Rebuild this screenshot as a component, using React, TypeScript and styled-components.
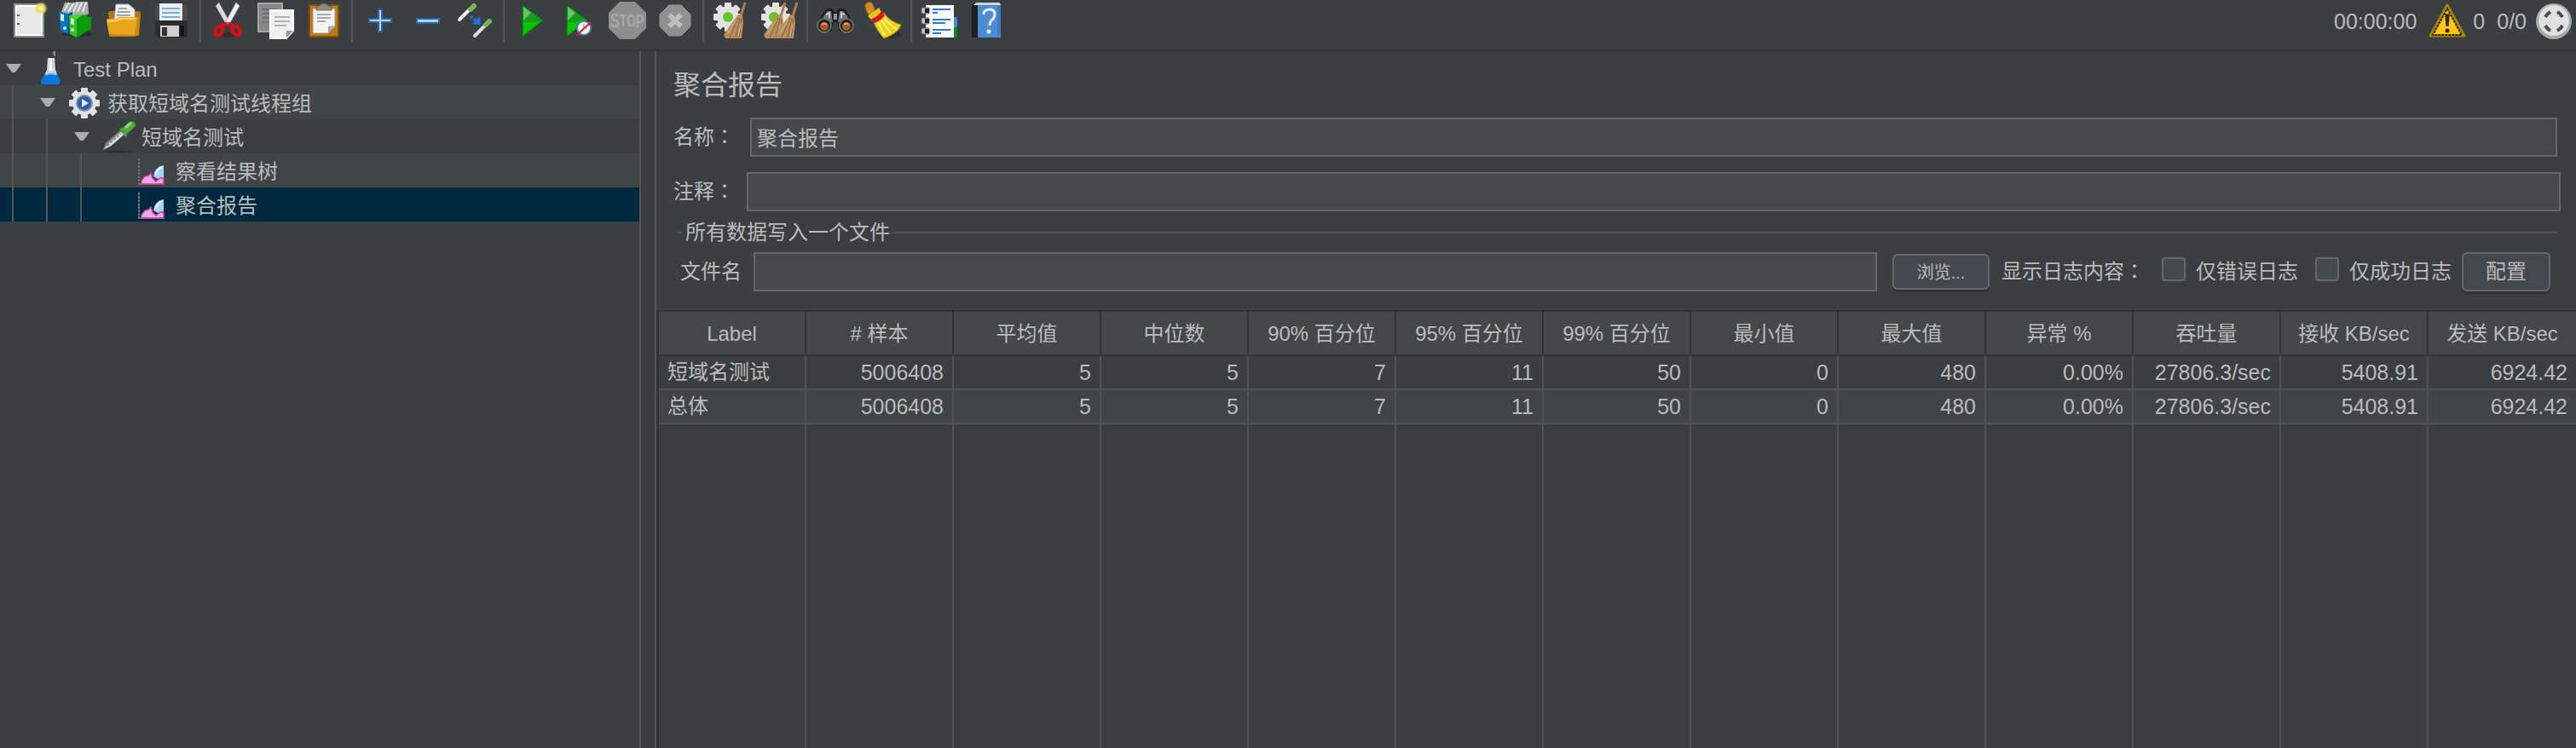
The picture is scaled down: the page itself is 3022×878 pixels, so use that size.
import React from "react";
import styled, { createGlobalStyle } from "styled-components";

const c = {
  bg: "#3b3f41",
  stripe: "#404547",
  field: "#454949",
  head: "#44484a",
  line: "#555555",
  grid: "#4f5354",
  border: "#666969",
  dark: "#303436",
  text: "#bbbbbb",
  select: "#00293f",
};

const GlobalStyle = createGlobalStyle`
  *, *::before, *::after { box-sizing: border-box; }
  body {
    margin: 0;
    background: ${c.bg};
    color: ${c.text};
    font: 24px/40px "Liberation Sans", "Noto Sans CJK SC", sans-serif;
  }
`;

const Window = styled.div`
  display: flex;
  flex-direction: column;
  min-height: 100vh;
`;

const Toolbar = styled.header`
  display: flex;
  justify-content: space-between;
  height: 60px;
  padding: 0 4px 0 6px;
  border-bottom: 2px solid ${c.dark};
`;

const Tools = styled.div`
  display: flex;
  height: 50px;
`;

const Group = styled.div`
  display: flex;
  & + & {
    margin-left: 4px;
    padding-left: 4px;
    border-left: 2px solid ${c.line};
  }
`;

const ToolButton = styled.button`
  width: 56px;
  height: 48px;
  padding: 2px 6px;
  border: 0;
  background: none;
  svg { display: block; }
`;

const Status = styled.div`
  display: flex;
  align-items: center;
  height: 50px;
  gap: 14px;
  font-size: 25px;
  svg { display: block; }
`;

const Errors = styled.div`
  display: flex;
  align-items: center;
  gap: 8px;
`;

const Counters = styled.div`
  display: flex;
  align-items: center;
  gap: 10px;
`;

const Body = styled.div`
  display: flex;
  flex: 1;
`;

const Sidebar = styled.nav`
  flex: 0 0 752px;
  border-right: 2px solid ${c.line};
`;

const Tree = styled.ul`
  margin: 0;
  padding: 0;
  list-style: none;
`;

const TreeRow = styled.li<{ $selected?: boolean }>`
  display: flex;
  height: 40px;
  background: ${c.bg};
  &:nth-child(even) { background: ${c.stripe}; }
  &&:nth-child(n) { ${(p) => (p.$selected ? `background: ${c.select};` : "")} }
`;

const Guide = styled.span`
  width: 40px;
  padding-left: 14px;
  &::before {
    content: "";
    display: block;
    width: 2px;
    height: 100%;
    background: ${c.line};
  }
`;

const Toggle = styled.span`
  display: flex;
  align-items: center;
  width: 40px;
  padding-left: 7px;
`;

const TreeIcon = styled.span`
  display: flex;
  align-items: center;
  width: 46px;
`;

const TreeLabel = styled.span`
  line-height: 44px;
`;

const Splitter = styled.div`
  width: 18px;
  border-right: 2px solid ${c.line};
`;

const Main = styled.main`
  display: flex;
  flex: 1;
  flex-direction: column;
  min-width: 0;
`;

const Form = styled.form`
  display: flex;
  flex-direction: column;
  height: 304px;
  padding: 16px 18px 0 20px;
`;

const Title = styled.h1`
  margin: 0 0 14px;
  font-size: 32px;
  font-weight: 400;
  line-height: 48px;
`;

const Field = styled.div<{ $inset?: boolean }>`
  display: flex;
  align-items: center;
  gap: ${(p) => (p.$inset ? 18 : 14)}px;
  margin: 0 ${(p) => (p.$inset ? 4 : 0)}px 18px 0;
`;

const Colon = styled.span`
  font-family: "Noto Sans CJK TC", sans-serif;
  line-height: 1;
`;

const TextInput = styled.input`
  flex: 1;
  min-width: 0;
  height: 46px;
  padding: 0 6px 2px;
  border: 2px solid ${c.border};
  background: ${c.field};
  color: inherit;
  font: inherit;
`;

const FileGroup = styled.fieldset`
  min-width: 0;
  margin: -13px 4px 0 4px;
  padding: 0 8px 0 4px;
  border: 0 solid ${c.line};
  border-top-width: 2px;
`;

const Legend = styled.legend`
  margin-left: 2px;
  padding: 0 4px;
  line-height: 40px;
`;

const FileRow = styled.div`
  display: flex;
  align-items: center;
  margin-top: 3px;
  height: 46px;
`;

const FileLabel = styled.label`
  margin-right: 14px;
`;

const Button = styled.button<{ $small?: boolean }>`
  flex: none;
  width: ${(p) => (p.$small ? 114 : 104)}px;
  height: ${(p) => (p.$small ? 42 : 46)}px;
  margin: ${(p) => (p.$small ? "0 14px 0 18px" : "0 0 0 12px")};
  padding: 0;
  border: 2px solid ${c.border};
  border-radius: 6px;
  background: #434a4d;
  box-shadow: 0 3px 1px ${c.dark};
  color: inherit;
  font: inherit;
  font-size: ${(p) => (p.$small ? 20 : 24)}px;
`;

const LogLabel = styled.span`
  width: 188px;
`;

const Check = styled.label`
  display: flex;
  align-items: center;
  gap: 12px;
  & + & { margin-left: 20px; }
`;

const Box = styled.input`
  appearance: none;
  width: 28px;
  height: 28px;
  margin: 0 0 6px;
  border: 2px solid ${c.border};
  border-radius: 4px;
  background: #434a4d;
`;

const Results = styled.table`
  flex: 1;
  width: 100%;
  table-layout: fixed;
  border-spacing: 0;
  border-left: 3px solid ${c.dark};
  border-top: 2px solid ${c.dark};
`;

const HeadCell = styled.th`
  height: 52px;
  padding: 2px 0 0;
  border: solid ${c.dark};
  border-width: 0 2px 2px 0;
  background: ${c.head};
  font-weight: 400;
  white-space: nowrap;
  &:last-child { border-right: 0; }
`;

const Row = styled.tr`
  height: 40px;
  &:nth-child(even) { background: ${c.stripe}; }
`;

const Cell = styled.td`
  padding: 0 10px;
  border: solid ${c.grid};
  border-width: 0 2px 2px 0;
  font-size: 25px;
  line-height: 38px;
  text-align: right;
  white-space: nowrap;
  &:first-child {
    font-size: 24px;
    text-align: left;
  }
  &:last-child { border-right: 0; }
`;

const Filler = styled.td`
  border-right: 2px solid ${c.grid};
  &:last-child { border-right: 0; }
`;

const Art = ({ children, w = 44, h = 44 }: { children: React.ReactNode; w?: number; h?: number }) => (
  <svg width={w} height={h} viewBox={`0 0 ${w} ${h}`} aria-hidden="true">
    {children}
  </svg>
);

const NewIcon = () => (
  <Art>
    <defs>
      <radialGradient id="glow"><stop offset="0" stopColor="#fffbe0" /><stop offset=".5" stopColor="#f2df55" /><stop offset="1" stopColor="#f2df55" stopOpacity="0" /></radialGradient>
    </defs>
    <rect x="5" y="3" width="34" height="38" fill="#e8e8e8" stroke="#8d8d89" strokeWidth="2" />
    <rect x="7" y="5" width="30" height="34" fill="none" stroke="#fff" strokeWidth="2" />
    <path d="M8 16h3M8 26h3" stroke="#666" strokeWidth="2" />
    <circle cx="36" cy="8" r="8" fill="url(#glow)" />
  </Art>
);

const TemplatesIcon = () => (
  <Art>
    <ellipse cx="23" cy="38" rx="18" ry="3" fill="#2c2f31" />
    <path d="M4 12l4-11h8l2 3 3-4h14l1 14-16 8z" fill="#a9adae" />
    <path d="M7 11l6-10M12 12l7-11M23 12l5-11M29 12l4-11M18 12l5-11" stroke="#e6e9ea" strokeWidth="2" />
    <path d="M1 11l11 3v24L3 34z" fill="#0a74c4" />
    <path d="M12 14l5-2v26l-5 0z" fill="#0a4f91" />
    <path d="M3 14l4 1v8l-4-1z" fill="#d8efff" />
    <circle cx="8" cy="31" r="2" fill="#d8efff" />
    <path d="M13 16l9 4v22l-8-4z" fill="#33c51c" />
    <path d="M22 20l7-5 10 3v14l-17 10z" fill="#0b9a0b" />
    <path d="M13 16l9-1 7 0-7 5z" fill="#4bd536" />
    <path d="M15 19l4 1v7l-4-1z" fill="#d8ffcf" />
    <circle cx="17" cy="33" r="2" fill="#d8ffcf" />
  </Art>
);

const OpenIcon = () => (
  <Art>
    <path d="M3 14q0-3 3-3h32q3 0 3 3l-3 26H8z" fill="#b8770c" />
    <path d="M12 3h15l7 6v20H9z" fill="#f1f1f1" stroke="#aaa" />
    <path d="M15 8h10M14 12h15M13 16h16" stroke="#a5a5a5" strokeWidth="2" />
    <path d="M1 22q0-2 2-2h10l3-2h19q3 0 3 3l-3 18q0 2-3 2H7q-3 0-3-2z" fill="#e9a51d" />
    <path d="M2 23l12-1 3-2h18" stroke="#ffd268" strokeWidth="2" fill="none" />
    <path d="M4 38q0 3 3 3h27l5-2 2-25-4 6-3 19z" fill="#c9850f" />
  </Art>
);

const SaveIcon = () => (
  <Art>
    <path d="M2 3h38v36q0 3-3 3H6l-4-4z" fill="#4a4a4c" />
    <path d="M2 22h38v17q0 3-3 3H6l-4-4z" fill="#2c2c2e" />
    <rect x="7" y="2" width="27" height="20" fill="#e6f1fb" />
    <path d="M10 8h21M10 13h21M10 18h21" stroke="#82acd0" strokeWidth="2" />
    <rect x="8" y="28" width="22" height="13" fill="#cfcfcf" />
    <rect x="10" y="30" width="6" height="10" fill="#333" />
    <rect x="31" y="28" width="5" height="12" fill="#111" />
  </Art>
);

const CutIcon = () => (
  <Art>
    <ellipse cx="22" cy="39" rx="13" ry="3" fill="#2d3032" />
    <path d="M7 5l4-4 13 24-4 3z" fill="#d8d8d6" />
    <path d="M35 5l-4-4-13 24 4 3z" fill="#f0f0ee" stroke="#aaa" strokeWidth=".7" />
    <g fill="none" stroke="#df0d12" strokeWidth="4">
      <ellipse cx="11" cy="34" rx="4" ry="6" transform="rotate(35 11 34)" />
      <ellipse cx="31" cy="34" rx="4" ry="6" transform="rotate(-35 31 34)" />
      <path d="M14 28l5-2h4l5 2" />
    </g>
    <circle cx="21" cy="25" r="1.5" fill="#777" />
  </Art>
);

const CopyIcon = () => (
  <Art>
    <rect x="1" y="2" width="28" height="33" fill="#858788" stroke="#a4a6a6" strokeWidth="2" />
    <path d="M6 9h18M6 14h18M6 19h12M6 24h9" stroke="#6d6f70" strokeWidth="2" />
    <path d="M15 10h27v24l-8 9H15z" fill="#efefef" stroke="#fff" strokeWidth="2" />
    <path d="M20 18h18M20 23h18M20 28h14" stroke="#b1b1b1" strokeWidth="2" />
    <path d="M42 34h-8v9z" fill="#999" />
  </Art>
);

const PasteIcon = () => (
  <Art>
    <rect x="5" y="4" width="34" height="37" rx="1" fill="#bf7a14" stroke="#8a4d06" strokeWidth="2" />
    <path d="M9 8h26v21l-8 8H9z" fill="#f3f3f3" stroke="#999" />
    <path d="M14 15h16M14 19h16M14 23h10" stroke="#aaa" strokeWidth="2" />
    <path d="M35 28l-8 9v-8z" fill="#aaa" />
    <path d="M13 10V6l4-1q5-6 10 0l4 1v4z" fill="#8b8b7c" stroke="#6a6a5c" />
  </Art>
);

const PlusIcon = () => (
  <Art>
    <path d="M20 9h4v11h11v4H24v11h-4V24H9v-4h11z" fill="#b6d4f4" stroke="#2a66b0" strokeWidth="2" />
  </Art>
);

const MinusIcon = () => (
  <Art>
    <rect x="9" y="20" width="26" height="5" fill="#b6d4f4" stroke="#2a66b0" strokeWidth="2" />
  </Art>
);

const ToggleIcon = () => (
  <Art>
    <g strokeLinecap="round">
      <path d="M3 21L15 9" stroke="#f2f2ee" strokeWidth="4" />
      <path d="M16 9l4-4" stroke="#77b357" strokeWidth="6" />
      <path d="M21 40l12-12" stroke="#dcdcd8" strokeWidth="4" />
      <path d="M34 27l4-4" stroke="#77b357" strokeWidth="6" />
    </g>
    <path d="M16 17l6 5" stroke="#1973e0" strokeWidth="4" strokeDasharray="3 2" />
    <path d="M27 17l1 10-10-1z" fill="#1973e0" />
  </Art>
);

const Triangle = ({ x }: { x: number }) => (
  <>
    <path d={`M${x} 4l24 18-24 19z`} fill="#0fa50c" stroke="#077a06" />
    <path d={`M${x + 1} 6l21 16H${x + 1}z`} fill="#169a22" />
    <path d={`M${x + 1} 6l9 7-9 9z`} fill="#63c46c" />
    <path d={`M${x + 1} 24h19l-19 15z`} fill="#0ac407" />
  </>
);

const StartIcon = () => <Art><Triangle x={11} /></Art>;

const StartNoTimersIcon = () => (
  <Art>
    <Triangle x={7} />
    <circle cx="27" cy="31" r="8" fill="#f4f7fb" stroke="#5482b4" strokeWidth="2" />
    <path d="M27 26v5h4" stroke="#888" fill="none" />
    <path d="M18 40l17-16" stroke="#e02222" strokeWidth="2" />
  </Art>
);

const StopIcon = () => (
  <Art>
    <path d="M13 0h18l13 13v18L31 44H13L0 31V13z" fill="#8d8d8d" />
    <g fill="none" stroke="#a6a6a6" strokeWidth="2.5">
      <path d="M11 17q-1-2-4-2t-3 3 4 4 3 4-4 3-4-3M13 16h8M17 16v13" />
      <rect x="23" y="16" width="7" height="12" rx="3" />
      <path d="M34 30V16h3q3 0 3 4t-3 4h-3" />
    </g>
  </Art>
);

const ShutdownIcon = () => (
  <Art>
    <path d="M15 4h14l11 11v14L29 40H15L4 29V15z" fill="#909090" stroke="#999" />
    <path d="M15 15l14 14M29 15L15 29" stroke="#bdbdbd" strokeWidth="6" />
  </Art>
);

const cog = (cx: number, cy: number, r: number) => (
  <g fill="#e2e2e2">
    {[0, 45, 90, 135].map((a) => (
      <rect key={a} x={cx - 4} y={cy - r} width="8" height={r * 2} rx="1" transform={`rotate(${a} ${cx} ${cy})`} />
    ))}
    <circle cx={cx} cy={cy} r={r - 4} />
  </g>
);

const Straw = ({ x }: { x: number }) => (
  <g>
    <path d={`M${x + 24} 1l-5 16`} stroke="#a97d55" strokeWidth="3" />
    <path d={`M${x + 16} 15l5 2 1 8-2 18H${x + 1}l-2-4 8-12z`} fill="#b88e60" />
    <path d={`M${x + 16} 19L${x + 6} 42M${x + 18} 19l-5 23M${x + 20} 20l-3 22`} stroke="#8a6038" strokeWidth="1" />
    <path d={`M${x + 14} 21L${x + 3} 38M${x + 19} 26l-3 15`} stroke="#d8b588" strokeWidth="1" />
  </g>
);

const ClearIcon = () => (
  <Art>
    {cog(18, 18, 17)}
    <circle cx="18" cy="18" r="6" fill="#6cc22a" />
    <Straw x={14} />
  </Art>
);

const ClearAllIcon = () => (
  <Art>
    {cog(18, 18, 17)}
    <circle cx="16" cy="18" r="6" fill="#6cc22a" />
    <Straw x={5} />
    <Straw x={19} />
  </Art>
);

const SearchIcon = () => (
  <Art>
    <path d="M0 30l7-16 5-6h6l3 4h2l3-4h6l5 6 7 16-5 5H27l-3-11h-4l-3 11H5z" fill="#1b1b1c" />
    <path d="M8 17l5-6h4l2 14-4-3-8-1zM36 17l-5-6h-4l-2 14 4-3 8-1z" fill="#727676" />
    <path d="M11 15l4-2v6M33 15l-4-2v6" stroke="#c2c6c6" strokeWidth="2" fill="none" />
    <path d="M20 14h4v7h-4z" fill="#8f9393" />
    <circle cx="9" cy="28" r="8" fill="#202020" stroke="#6c7070" strokeWidth="2" />
    <circle cx="35" cy="28" r="8" fill="#202020" stroke="#6c7070" strokeWidth="2" />
    <circle cx="9" cy="29" r="5" fill="#a65a28" />
    <circle cx="35" cy="29" r="5" fill="#a65a28" />
    <path d="M6 27q3-3 6 0M32 27q3-3 6 0" stroke="#e2a070" strokeWidth="2" fill="none" />
  </Art>
);

const BroomIcon = () => (
  <Art>
    <ellipse cx="30" cy="39" rx="14" ry="4" fill="#2e3133" />
    <path d="M1 3q3-4 8-2l3 7 1 9-6 1Q0 10 1 3z" fill="#d28a2d" stroke="#8c5617" />
    <path d="M4 17l13-10 4 7-11 9z" fill="#e6c51c" />
    <path d="M10 22l13-9q6 10 20 14-3 10-20 16-8-8-13-21z" fill="#ecd31b" stroke="#a98c0c" />
    <path d="M16 24l8 16M20 22l11 15M23 20l15 13" stroke="#fff27c" strokeWidth="2" />
    <path d="M8 20q8-2 12-9l4 5q-5 7-13 9z" fill="#d8141a" />
  </Art>
);

const LogIcon = () => (
  <Art>
    <rect x="36" y="18" width="7" height="12" rx="2" fill="#3f8fe6" />
    <rect x="36" y="30" width="7" height="12" rx="2" fill="#108a1c" />
    <rect x="6" y="4" width="33" height="38" fill="#fcfcfc" />
    <path d="M14 9h21M14 13h6M14 21h21M14 25h15M14 33h21M14 37h10" stroke="#2b78d0" strokeWidth="2" />
    {[7, 19, 31].map((y) => (
      <g key={y}>
        <rect x="1" y={y} width="9" height="7" rx="1" fill="#c8c8c8" stroke="#555" />
        <rect x="5" y={y + 1} width="5" height="5" fill="#222" />
      </g>
    ))}
  </Art>
);

const HelpIcon = () => (
  <Art>
    <path d="M4 5l4-4h30v37l-3 4H4z" fill="#1f1f20" />
    <path d="M6 4l3-3h28l1 3z" fill="#cfd4d8" />
    <rect x="11" y="4" width="27" height="38" fill="#4c8cd6" />
    <path d="M34 4h4v34l-4 4z" fill="#3f7cc4" />
    <path d="M18 15q0-6 7-6 6 0 6 6 0 4-4 7-2 2-2 6" fill="none" stroke="#eaf3ff" strokeWidth="3" />
    <circle cx="24" cy="35" r="2.5" fill="#eaf3ff" />
  </Art>
);

const WarningIcon = () => (
  <Art>
    <path d="M22 3L42 39H2z" fill="#d9a90a" stroke="#a98608" strokeWidth="3" strokeLinejoin="round" />
    <path d="M22 7L39 38H5z" fill="#fbc90a" stroke="#2b2406" strokeWidth="2" strokeDasharray="3 1" />
    <path d="M20 14h4l-1 13h-2z" fill="#33290a" stroke="#33290a" strokeWidth="1.5" />
    <circle cx="22" cy="33" r="2.5" fill="#33290a" />
  </Art>
);

const RemoteIcon = () => (
  <Art>
    <circle cx="22" cy="22" r="21" fill="#a9a9a9" />
    <circle cx="22" cy="21" r="18" fill="#e0e0e0" />
    <path d="M12 17q2-4 6-6M26 11q4 2 6 6M12 27q2 4 6 6M26 33q4-2 6-6" stroke="#4b4b4b" strokeWidth="4" fill="none" />
  </Art>
);

const Arrow = () => (
  <Art w={18} h={12}><path d="M0 1h18L11 11H7z" fill="#adadad" /></Art>
);

const FlaskIcon = () => (
  <Art w={46} h={40}>
    <ellipse cx="19" cy="37" rx="14" ry="2" fill="#2c2f31" />
    <path d="M22 3l2-2v5" stroke="#888" strokeWidth="2" fill="none" />
    <path d="M16 8h8l1 14 5 13q0 4-4 4H12q-4 0-3-4l6-13z" fill="#d3d7d9" />
    <path d="M18 9h3v14h-3z" fill="#f6f6f6" />
    <path d="M13 27h14l4 9q0 3-4 3H11q-4 0-3-3z" fill="#0878e0" />
    <path d="M14 28q6-3 12 0" stroke="#6eb8ff" strokeWidth="2" fill="none" />
  </Art>
);

const GroupIcon = () => (
  <Art w={46} h={40}>
    {cog(19, 21, 18)}
    <circle cx="19" cy="21" r="9" fill="#2f5c9c" stroke="#7d93b5" strokeWidth="2" />
    <path d="M16 16l8 5-8 5z" fill="#dfeaf7" />
  </Art>
);

const DropperIcon = () => (
  <Art w={46} h={40}>
    <ellipse cx="18" cy="38" rx="16" ry="1.5" fill="#2c2f31" />
    <path d="M1 36l3-8 17-15 5 5-16 14z" fill="#808484" />
    <path d="M2 35l5-6 15-14 3 3-15 13z" fill="#e4e4e2" />
    <path d="M6 31L22 17" stroke="#777" strokeWidth="1.5" strokeDasharray="3 2" />
    <path d="M20 11l4-1 8-7q4-2 6 1t-1 6l-8 7-1 5z" fill="#4fa83a" />
    <path d="M27 10l7-6" stroke="#8ad977" strokeWidth="3" />
  </Art>
);

const ReportIcon = () => (
  <Art w={46} h={40}>
    <path d="M3 5v31h30" stroke="#6d7072" strokeWidth="2" fill="none" />
    <path d="M3 5v31" stroke="#3b3f41" strokeWidth="2" strokeDasharray="1 3" />
    <path d="M20 27q1-11 12-13v14l-5 3z" fill="#a9d0fb" />
    <path d="M23 25q1-6 7-9" stroke="#e6f3ff" strokeWidth="2" fill="none" />
    <path d="M6 36v-4l4-5 4-1 3-3 2 6 4 4 5-4h4v7z" fill="#f5a6ea" stroke="#c63d95" strokeWidth="1.5" />
  </Art>
);

const toolGroups: [string, () => React.JSX.Element][][] = [
  [["新建", NewIcon], ["模板", TemplatesIcon], ["打开", OpenIcon], ["保存", SaveIcon]],
  [["剪切", CutIcon], ["复制", CopyIcon], ["粘贴", PasteIcon]],
  [["全部展开", PlusIcon], ["全部折叠", MinusIcon], ["切换", ToggleIcon]],
  [["启动", StartIcon], ["不停顿开始", StartNoTimersIcon], ["停止", StopIcon], ["关闭", ShutdownIcon]],
  [["清除", ClearIcon], ["清除全部", ClearAllIcon]],
  [["查找", SearchIcon], ["重置搜索", BroomIcon]],
  [["函数助手", LogIcon], ["帮助", HelpIcon]],
];

const nodes = [
  { depth: 0, label: "Test Plan", Icon: FlaskIcon },
  { depth: 1, label: "获取短域名测试线程组", Icon: GroupIcon },
  { depth: 2, label: "短域名测试", Icon: DropperIcon },
  { depth: 3, label: "察看结果树", Icon: ReportIcon, leaf: true },
  { depth: 3, label: "聚合报告", Icon: ReportIcon, leaf: true, selected: true },
];

const columns = [
  "Label", "# 样本", "平均值", "中位数", "90% 百分位", "95% 百分位", "99% 百分位",
  "最小值", "最大值", "异常 %", "吞吐量", "接收 KB/sec", "发送 KB/sec",
];

const stats = ["5006408", "5", "5", "7", "11", "50", "0", "480", "0.00%", "27806.3/sec", "5408.91", "6924.42"];
const rows = [["短域名测试", ...stats], ["总体", ...stats]];

export default function App() {
  return (
    <Window>
      <GlobalStyle />
      <Toolbar>
        <Tools>
          {toolGroups.map((group, i) => (
            <Group key={i}>
              {group.map(([name, Icon]) => (
                <ToolButton key={name} type="button" aria-label={name}><Icon /></ToolButton>
              ))}
            </Group>
          ))}
        </Tools>
        <Status>
          <span>00:00:00</span>
          <Errors><WarningIcon /><span>0</span></Errors>
          <Counters><span>0/0</span><RemoteIcon /></Counters>
        </Status>
      </Toolbar>
      <Body>
        <Sidebar>
          <Tree>
            {nodes.map(({ depth, label, Icon, leaf, selected }) => (
              <TreeRow key={label} $selected={selected}>
                {Array.from({ length: depth }, (_, i) => <Guide key={i} />)}
                <Toggle>{!leaf && <Arrow />}</Toggle>
                <TreeIcon><Icon /></TreeIcon>
                <TreeLabel>{label}</TreeLabel>
              </TreeRow>
            ))}
          </Tree>
        </Sidebar>
        <Splitter />
        <Main>
          <Form>
            <Title>聚合报告</Title>
            <Field $inset>
              <label htmlFor="name">名称<Colon>：</Colon></label>
              <TextInput id="name" defaultValue="聚合报告" />
            </Field>
            <Field>
              <label htmlFor="comment">注释<Colon>：</Colon></label>
              <TextInput id="comment" />
            </Field>
            <FileGroup>
              <Legend>所有数据写入一个文件</Legend>
              <FileRow>
                <FileLabel htmlFor="file">文件名</FileLabel>
                <TextInput id="file" />
                <Button type="button" $small>浏览...</Button>
                <LogLabel>显示日志内容<Colon>：</Colon></LogLabel>
                <Check><Box type="checkbox" />仅错误日志</Check>
                <Check><Box type="checkbox" />仅成功日志</Check>
                <Button type="button">配置</Button>
              </FileRow>
            </FileGroup>
          </Form>
          <Results>
            <thead>
              <tr>{columns.map((name) => <HeadCell key={name}>{name}</HeadCell>)}</tr>
            </thead>
            <tbody>
              {rows.map((row) => (
                <Row key={row[0]}>{row.map((value, i) => <Cell key={i}>{value}</Cell>)}</Row>
              ))}
              <tr aria-hidden="true">{columns.map((name) => <Filler key={name} />)}</tr>
            </tbody>
          </Results>
        </Main>
      </Body>
    </Window>
  );
}
